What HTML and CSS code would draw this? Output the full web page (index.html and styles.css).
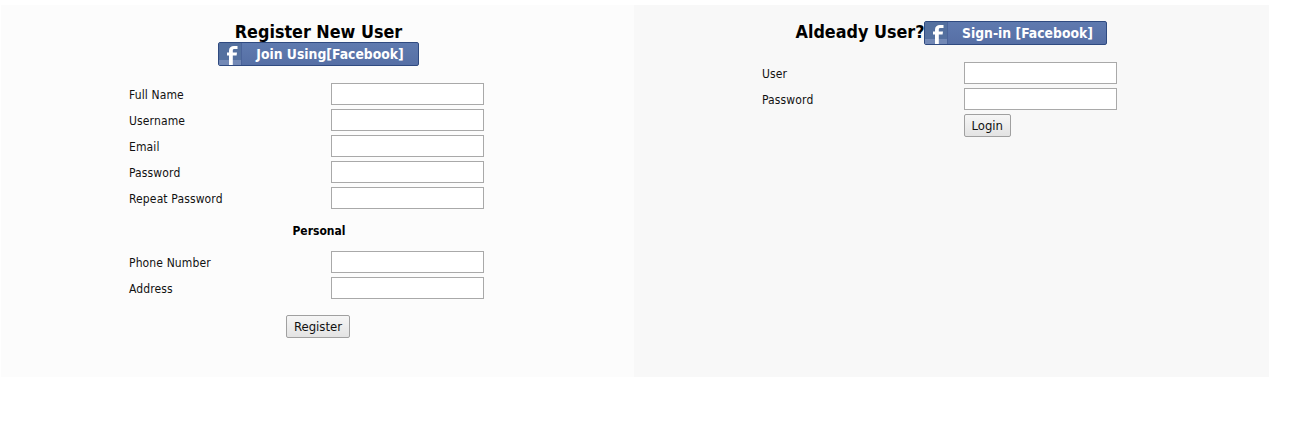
FILE: index.html
```html
<!DOCTYPE html>
<html lang="en">
<head>
<meta charset="utf-8">
<title>Register</title>
<link rel="stylesheet" href="styles.css">
</head>
<body>
<main class="page">
  <section class="panel panel-left">
    <h2 class="title">Register New User</h2>
    <a class="fb fb-join" href="#">
      <span class="fb-icon"><svg viewBox="0 0 22 22" width="22" height="22"><path d="M10 22V12.500H8V9.500H10V7.500C10 4.500 12 3 15 3H18.500V6H15.500C14.200 6 13.800 6.500 13.800 7.500V9.500H18L17.600 12.500H13.800V22Z" fill="#fff"/></svg></span>
      <span class="fb-text">Join Using[Facebook]</span>
    </a>
    <form class="form form-register">
      <div class="row"><label>Full Name</label><input type="text"></div>
      <div class="row"><label>Username</label><input type="text"></div>
      <div class="row"><label>Email</label><input type="text"></div>
      <div class="row"><label>Password</label><input type="password"></div>
      <div class="row"><label>Repeat Password</label><input type="password"></div>
      <h4 class="subhead">Personal</h4>
      <div class="row"><label>Phone Number</label><input type="text"></div>
      <div class="row"><label>Address</label><input type="text"></div>
      <div class="submit-center"><button type="button" class="btn">Register</button></div>
    </form>
  </section>
  <section class="panel panel-right">
    <div class="signin-head">
      <h2 class="title">Aldeady User?</h2>
      <a class="fb fb-signin" href="#">
        <span class="fb-icon"><svg viewBox="0 0 22 22" width="22" height="22"><path d="M10 22V12.500H8V9.500H10V7.500C10 4.500 12 3 15 3H18.500V6H15.500C14.200 6 13.800 6.500 13.800 7.500V9.500H18L17.600 12.500H13.800V22Z" fill="#fff"/></svg></span>
        <span class="fb-text">Sign-in [Facebook]</span>
      </a>
    </div>
    <form class="form form-login">
      <div class="row"><label>User</label><input type="text"></div>
      <div class="row"><label>Password</label><input type="password"></div>
      <div class="row"><span></span><button type="button" class="btn">Login</button></div>
    </form>
  </section>
</main>
</body>
</html>
```

FILE: styles.css
```css
html, body { margin: 0; padding: 0; background: #fff; }
body { font-family: "DejaVu Sans Condensed", "DejaVu Sans", sans-serif; font-size: 12px; color: #111; }
.page { display: flex; width: 1268px; height: 372px; margin: 5px 0 0 1px; }
.panel { height: 372px; }
.panel-left { background: #fcfcfc; display: flex; flex-direction: column; align-items: center; width: 633px; padding: 17px 0 0 2px; box-sizing: border-box; }
.panel-right { background: #f8f8f8; width: 635px; padding-top: 16px; box-sizing: border-box; display: flex; flex-direction: column; }
.title { margin: 0; font-size: 17.8px; line-height: 20px; font-weight: bold; color: #000; white-space: nowrap; }
.fb { display: flex; align-items: stretch; box-sizing: border-box; height: 24px; border: 1px solid #2f4a80; border-radius: 2px; background: linear-gradient(#5f7aaf, #566fa5); color: #fff; text-decoration: none; font-weight: bold; font-size: 13.8px; }
.fb-icon { width: 22px; border-right: 1px solid #4b649a; background: linear-gradient(#54709f 0, #54709f 78%, #7389b6 78%); flex: none; overflow: hidden; }
.fb-icon svg { display: block; }
.fb-text { flex: 1; text-align: center; line-height: 22px; white-space: nowrap; }
.fb-join { width: 201px; }
.fb-signin { width: 183px; }
.form { display: flex; flex-direction: column; }
.form-register { width: 355px; margin-top: 17px; align-self: flex-start; margin-left: 126px; }
.form-login { width: 355px; margin-top: 17px; margin-left: 128px; }
.row { display: grid; grid-template-columns: 202px 153px; align-items: center; height: 22px; margin-bottom: 4px; }
.row label { font-size: 12px; letter-spacing: .13px; line-height: 14px; padding-top: 2px; color: #111; white-space: nowrap; }
.row input { box-sizing: border-box; width: 153px; height: 22px; margin: 0; border: 1px solid #a9a9a9; background: #fff; padding: 1px 3px; }
.subhead { margin: 11px 0 13px; font-size: 12px; line-height: 14px; font-weight: bold; color: #000; text-align: center; padding-left: 25px; }
.submit-center { display: flex; justify-content: center; margin-top: 12px; padding-left: 23px; }
.btn { box-sizing: border-box; height: 23px; padding: 0 7px; margin: 0; border: 1px solid #a0a0a0; border-radius: 2px; background: linear-gradient(#f6f6f6, #e3e3e3); font-family: "DejaVu Sans Condensed", "DejaVu Sans", sans-serif; font-size: 13px; color: #111; }
.form-login .btn { justify-self: start; padding: 0 6.5px; }
.signin-head { display: flex; justify-content: center; align-items: center; height: 24px; }
.signin-head .title { margin-bottom: 2px; }
```
